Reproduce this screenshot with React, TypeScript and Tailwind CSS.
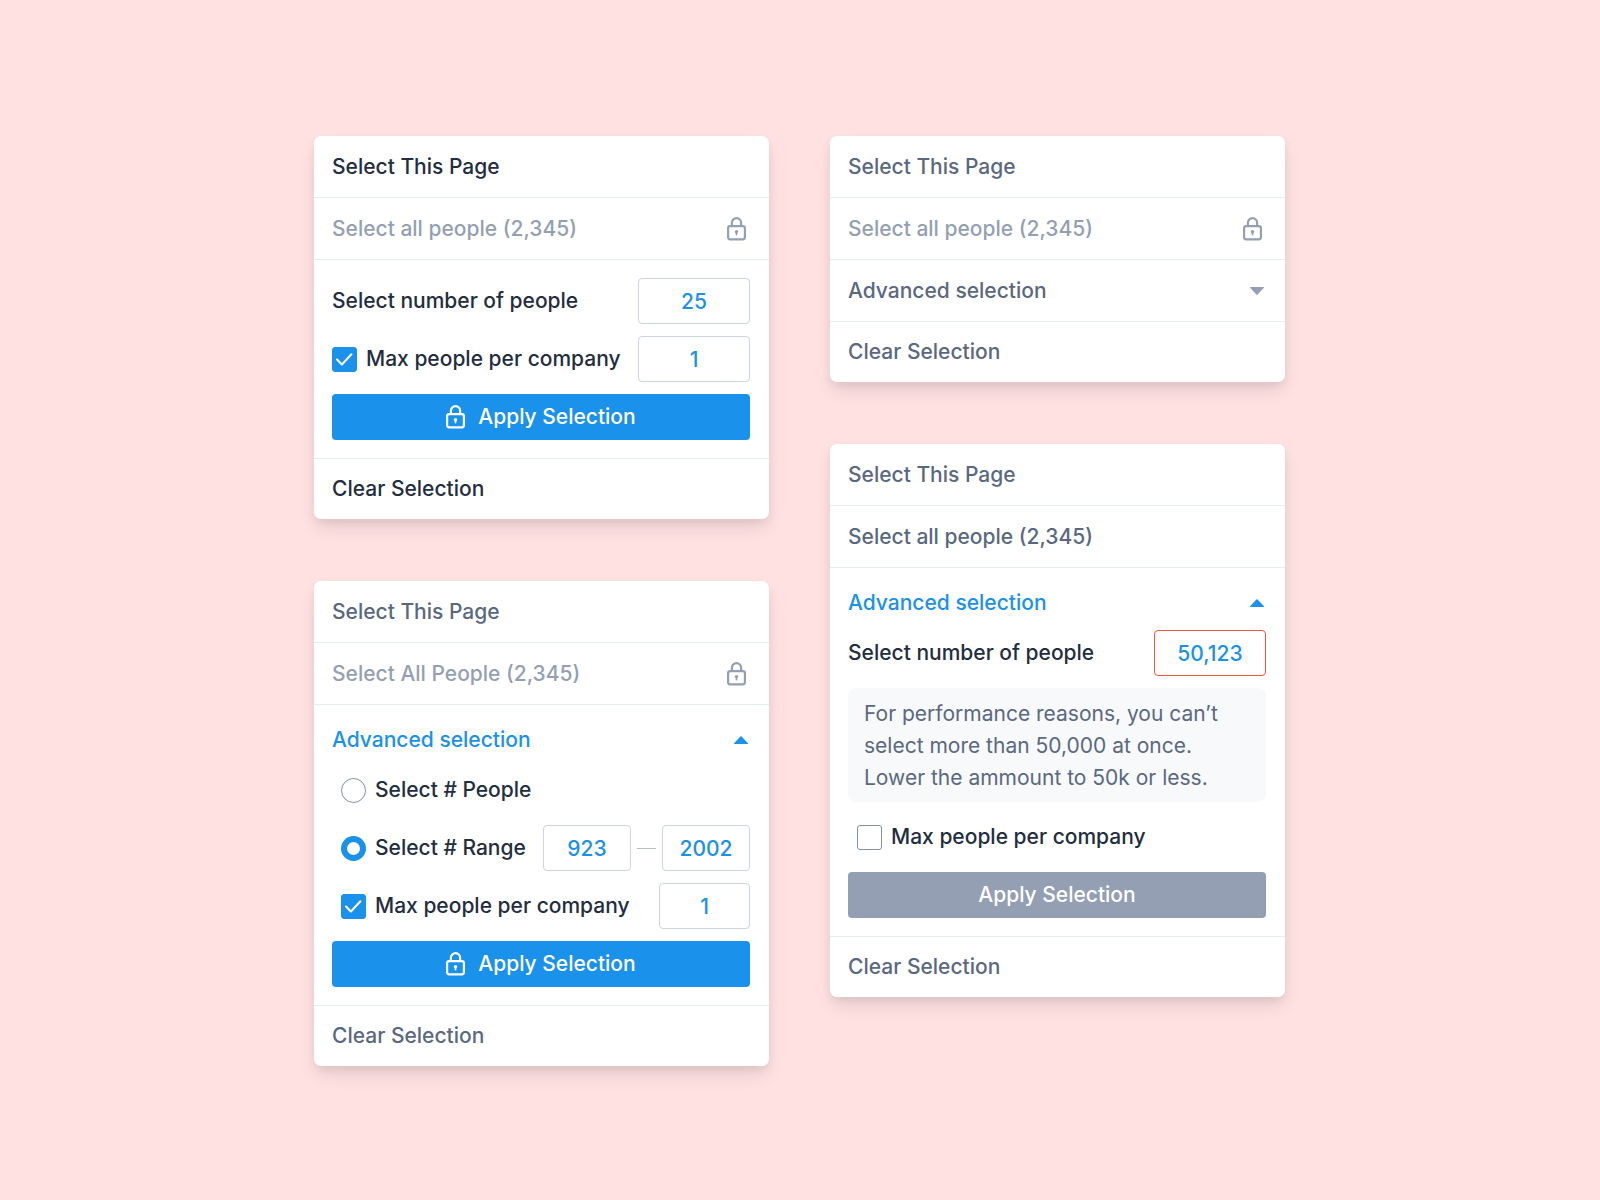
import React from 'react'
import clsx from 'clsx'

type Tone = 'dark' | 'muted' | 'disabled'

const toneClass: Record<Tone, string> = {
  dark: 'text-[#232d40]',
  muted: 'text-[#5a6880]',
  disabled: 'text-[#949fb3]'
}

const LockIcon = () => (
  <svg width="19" height="24" viewBox="0 0 19 24" fill="none" className="shrink-0" aria-hidden="true">
    <path d="M4.9 9.1V5.8a4.6 4.6 0 0 1 9.2 0v3.3" stroke="currentColor" strokeWidth="2.2" />
    <rect x="1.1" y="9.1" width="16.8" height="13.2" rx="2" stroke="currentColor" strokeWidth="2.2" />
    <circle cx="9.5" cy="14.6" r="1.7" fill="currentColor" />
    <path d="M9.5 14.6v3" stroke="currentColor" strokeWidth="1.8" strokeLinecap="round" />
  </svg>
)

const CaretIcon = ({ open }: { open?: boolean }) => (
  <svg width="14" height="8" viewBox="0 0 14 8" fill="currentColor" className="shrink-0" aria-hidden="true">
    {open ? (
      <path d="M0.4 7.9Q-.3 7.9.3 7.1L6.4.5Q7 0 7.6.5L13.7 7.1Q14.3 7.9 13.6 7.9z" />
    ) : (
      <path d="M0.4.1Q-.3.1.3.9L6.4 7.5Q7 8 7.6 7.5L13.7.9Q14.3.1 13.6.1z" />
    )}
  </svg>
)

const Card = ({ children }: { children: React.ReactNode }) => (
  <section className="w-full divide-y divide-[#e6edf4] overflow-hidden rounded-[7px] bg-white shadow-[0_10px_18px_-2px_rgba(0,0,0,0.1),0_4px_8px_rgba(0,0,0,0.05)]">
    {children}
  </section>
)

interface RowProps {
  label: string
  tone?: Tone
  locked?: boolean
  last?: boolean
}

const Row = ({ label, tone = 'muted', locked, last }: RowProps) => (
  <button
    type="button"
    disabled={locked}
    className={clsx(
      'flex w-full items-center justify-between pr-[19px] pl-[18px] text-left',
      last ? 'h-[60px]' : 'h-[62px]',
      locked ? toneClass.disabled : toneClass[tone]
    )}
  >
    {label}
    {locked && (
      <span className="pr-1">
        <LockIcon />
      </span>
    )}
  </button>
)

const AdvancedHeader = () => (
  <button type="button" aria-expanded="true" className="mb-2.5 flex h-[34px] w-full items-center justify-between pr-0.5 text-[#1a91eb]">
    Advanced selection
    <CaretIcon open />
  </button>
)

const Panel = ({ children, advanced }: { children: React.ReactNode; advanced?: boolean }) => (
  <div className="py-[18px] pr-[19px] pl-[18px] text-[#232d40]">
    {advanced && <AdvancedHeader />}
    <div className="flex flex-col gap-3">{children}</div>
  </div>
)

const Field = ({ children, indent }: { children: React.ReactNode; indent?: boolean }) => (
  <div className={clsx('flex h-[46px] items-center justify-between', indent && 'pl-[9px]')}>{children}</div>
)

interface NumberInputProps {
  id?: string
  label?: string
  value: string
  size?: 'sm' | 'md' | 'lg'
  invalid?: boolean
}

const NumberInput = ({ id, label, value, size = 'lg', invalid }: NumberInputProps) => (
  <input
    id={id}
    aria-label={label}
    aria-invalid={invalid}
    type="text"
    inputMode="numeric"
    defaultValue={value}
    className={clsx(
      'h-[46px] rounded-[4px] border bg-white text-center text-[#1a91eb] outline-none',
      size === 'sm' && 'w-[88px]',
      size === 'md' && 'w-[91px]',
      size === 'lg' && 'w-[112px]',
      invalid ? 'border-[#f0563d]' : 'border-[#ccd4e0]'
    )}
  />
)

const Checkbox = ({ label, checked }: { label: string; checked?: boolean }) => (
  <label className="flex items-center gap-[9px]">
    <span className="relative flex">
      <input
        type="checkbox"
        defaultChecked={checked}
        className="peer size-[25px] appearance-none rounded-[3px] border border-[#8490a6] bg-white checked:border-[#1a91eb] checked:bg-[#1a91eb]"
      />
      <svg
        viewBox="0 0 25 25"
        fill="none"
        className="pointer-events-none absolute inset-0 hidden size-[25px] peer-checked:block"
        aria-hidden="true"
      >
        <path d="M5 12.6 9.9 17.5 19.4 7.3" stroke="white" strokeWidth="2.1" strokeLinecap="round" strokeLinejoin="round" />
      </svg>
    </span>
    {label}
  </label>
)

const Radio = ({ label, checked }: { label: string; checked?: boolean }) => (
  <label className="flex items-center gap-[9px]">
    <input
      type="radio"
      name="selection-mode"
      defaultChecked={checked}
      className="size-[25px] appearance-none rounded-full border border-[#8490a6] bg-white checked:border-[6px] checked:border-[#1a91eb]"
    />
    {label}
  </label>
)

const ApplyButton = ({ locked, disabled }: { locked?: boolean; disabled?: boolean }) => (
  <button
    type="button"
    disabled={disabled}
    className={clsx(
      'flex h-[46px] w-full items-center justify-center gap-[13px] rounded-[4px] text-white',
      disabled ? 'bg-[#949fb3]' : 'bg-[#1a91eb]'
    )}
  >
    {locked && <LockIcon />}
    Apply Selection
  </button>
)

const App = () => {
  return (
    <main className="flex min-h-screen flex-wrap items-start justify-center gap-[61px] bg-[#ffe1e2] pt-34 pr-px pb-34 font-['Inter',sans-serif] text-[21px] leading-8 font-medium">
      <div className="flex w-[455px] flex-col gap-[62px]">
        <Card>
          <Row label="Select This Page" tone="dark" />
          <Row label="Select all people (2,345)" locked />
          <Panel>
            <Field>
              <label htmlFor="people-count">Select number of people</label>
              <NumberInput id="people-count" value="25" />
            </Field>
            <Field>
              <Checkbox label="Max people per company" checked />
              <NumberInput label="Max people" value="1" />
            </Field>
            <ApplyButton locked />
          </Panel>
          <Row label="Clear Selection" tone="dark" last />
        </Card>

        <Card>
          <Row label="Select This Page" />
          <Row label="Select All People (2,345)" locked />
          <Panel advanced>
            <Field indent>
              <Radio label="Select # People" />
            </Field>
            <Field indent>
              <Radio label="Select # Range" checked />
              <div className="flex items-center gap-1.5">
                <NumberInput label="Range start" value="923" size="sm" />
                <span className="h-px w-[19px] bg-[#b9bec6]" />
                <NumberInput label="Range end" value="2002" size="sm" />
              </div>
            </Field>
            <Field indent>
              <Checkbox label="Max people per company" checked />
              <NumberInput label="Max people" value="1" size="md" />
            </Field>
            <ApplyButton locked />
          </Panel>
          <Row label="Clear Selection" last />
        </Card>
      </div>

      <div className="flex w-[455px] flex-col gap-[62px]">
        <Card>
          <Row label="Select This Page" />
          <Row label="Select all people (2,345)" locked />
          <button type="button" aria-expanded="false" className="flex h-[62px] w-full items-center justify-between pr-[21px] pl-[18px] text-[#5a6880]">
            Advanced selection
            <span className="text-[#949fb3]">
              <CaretIcon />
            </span>
          </button>
          <Row label="Clear Selection" last />
        </Card>

        <Card>
          <Row label="Select This Page" />
          <Row label="Select all people (2,345)" />
          <Panel advanced>
            <Field>
              <label htmlFor="people-limit">Select number of people</label>
              <NumberInput id="people-limit" value="50,123" invalid />
            </Field>
            <p className="rounded-lg bg-[#f7f9fb] px-4 pt-2.5 pb-2 font-normal text-[#5a6880]">
              For performance reasons, you can’t select more than 50,000 at once. Lower the ammount to 50k or less.
            </p>
            <Field indent>
              <Checkbox label="Max people per company" />
            </Field>
            <ApplyButton disabled />
          </Panel>
          <Row label="Clear Selection" last />
        </Card>
      </div>
    </main>
  )
}

export default App
